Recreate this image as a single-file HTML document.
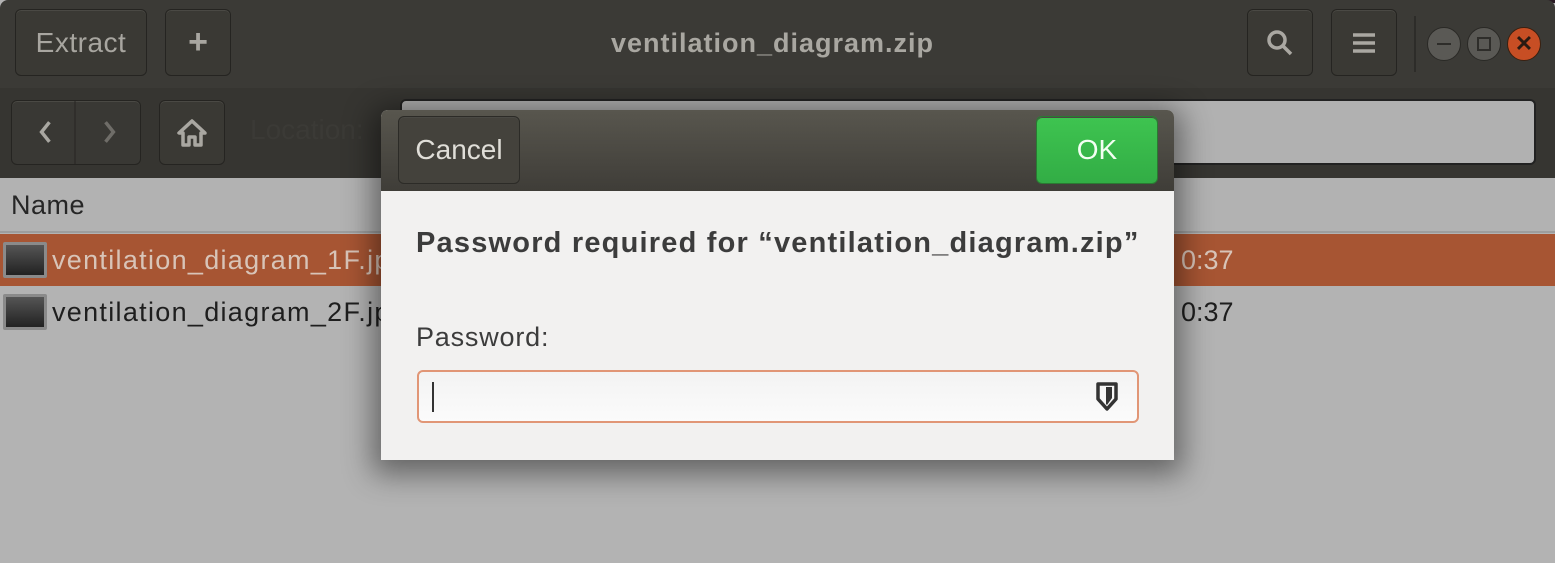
<!DOCTYPE html>
<html><head><meta charset="utf-8"><style>
*{box-sizing:border-box;margin:0;padding:0}
body{width:1555px;height:563px;overflow:hidden;background:#b3b3b3;font-family:"Liberation Sans",sans-serif;position:relative}
.abs{position:absolute}
.hb{left:0;top:0;width:1555px;height:88px;background:#3b3a36;border-radius:8px 8px 0 0}
.tb{left:0;top:88px;width:1555px;height:90px;background:#363531}
.btn{position:absolute;border:1px solid #252421;border-radius:6px;background:#3a3934;box-shadow:inset 0 1px 0 #4a4944;color:#a8a6a0;display:flex;align-items:center;justify-content:center}
.row{left:0;width:1555px;height:52px;font-size:27px;line-height:52px}
.ico{position:absolute;left:3px;top:8px;width:44px;height:36px;background:linear-gradient(#555,#222);border:3px solid #8a8a8a;border-radius:2px}
</style></head><body>
<div class="abs" style="left:1150px;top:0;width:405px;height:3px;background:#2a1a24"></div>
<div class="abs hb"></div>
<div class="btn" style="left:15px;top:9px;width:132px;height:67px;font-size:28px;letter-spacing:0.5px">Extract</div>
<div class="btn" style="left:165px;top:9px;width:66px;height:67px;font-size:34px;font-weight:bold">+</div>
<div class="abs" style="left:0;top:28px;width:1545px;text-align:center;font-size:27px;letter-spacing:1px;font-weight:bold;color:#a9a7a1">ventilation_diagram.zip</div>
<div class="btn" style="left:1247px;top:9px;width:66px;height:67px">
<svg width="30" height="30" viewBox="0 0 30 30"><circle cx="12" cy="12" r="8" fill="none" stroke="#aaa8a2" stroke-width="3.5"/><path d="M18 18 L26 26" stroke="#aaa8a2" stroke-width="3.5"/></svg></div>
<div class="btn" style="left:1331px;top:9px;width:66px;height:67px">
<svg width="22" height="22" viewBox="0 0 22 22"><path d="M0 3H22M0 11H22M0 19H22" stroke="#aaa8a2" stroke-width="3.5"/></svg></div>
<div class="abs" style="left:1414px;top:16px;width:2px;height:56px;background:#2d2c29"></div>
<div class="abs" style="left:1427px;top:27px;width:34px;height:34px;border-radius:50%;background:#5a5955;border:1px solid #2a2926"><div class="abs" style="left:9px;top:15px;width:14px;height:2px;background:#2e2d2a"></div></div>
<div class="abs" style="left:1467px;top:27px;width:34px;height:34px;border-radius:50%;background:#5a5955;border:1px solid #2a2926"><div class="abs" style="left:9px;top:9px;width:14px;height:14px;border:2px solid #2e2d2a"></div></div>
<div class="abs" style="left:1507px;top:27px;width:34px;height:34px;border-radius:50%;background:#c74e24;border:1px solid #3a2010;color:#2a1a12;font-size:22px;text-align:center;line-height:32px;font-weight:bold">✕</div>
<div class="abs tb"></div>
<div class="btn" style="left:11px;top:100px;width:130px;height:65px;background:#393834">
<svg width="130" height="65" viewBox="0 0 130 65"><path d="M38 22 L30 32 L38 42" fill="none" stroke="#a9a7a1" stroke-width="3.5"/><path d="M95 22 L103 32 L95 42" fill="none" stroke="#6f6d68" stroke-width="3.5"/><path d="M64 0V65" stroke="#262522" stroke-width="1"/></svg></div>
<div class="btn" style="left:159px;top:100px;width:66px;height:65px">
<svg width="32" height="30" viewBox="0 0 32 30"><path d="M16 3 L3 15 H7 V27 H13 V19 H19 V27 H25 V15 H29 Z" fill="none" stroke="#a9a7a1" stroke-width="3.5" stroke-linejoin="round"/></svg></div>
<div class="abs" style="left:250px;top:114px;font-size:28px;color:#3b3a36">Location:</div>
<div class="abs" style="left:400px;top:99px;width:1136px;height:66px;background:#b1b1b1;border:2px solid #222;border-radius:6px"></div>
<div class="abs" style="left:0;top:178px;width:1555px;height:55px;background:#b2b2b2;border-bottom:2px solid #9d9d9d;font-size:27px;letter-spacing:0.5px;line-height:55px;padding-left:11px;color:#262626">Name</div>
<div class="abs row" style="top:234px;background:#a75533;color:#d8c4b8"><div class="ico"></div><span style="position:absolute;left:52px;letter-spacing:1.3px">ventilation_diagram_1F.jpg</span><span style="position:absolute;left:1181px">0:37</span></div>
<div class="abs row" style="top:286px;color:#1e1e1e"><div class="ico"></div><span style="position:absolute;left:52px;letter-spacing:1.3px">ventilation_diagram_2F.jpg</span><span style="position:absolute;left:1181px">0:37</span></div>
<!-- dialog -->
<div class="abs" style="left:381px;top:110px;width:793px;height:350px;background:#f2f1f0;border-radius:7px 7px 0 0;box-shadow:0 6px 30px 8px rgba(0,0,0,0.45);overflow:hidden">
<div class="abs" style="left:0;top:0;width:793px;height:81px;background:linear-gradient(#58564e,#3f3d38)"></div>
<div class="btn" style="left:17px;top:6px;width:122px;height:68px;background:#44423c;border-color:#2c2b27;color:#e0ded8;font-size:28px">Cancel</div>
<div class="btn" style="left:655px;top:6px;width:122px;height:68px;background:linear-gradient(#3ec450,#32ad45);border-color:#2a7a32;color:#f2fff2;font-size:28px">OK</div>
<div class="abs" style="left:35px;top:117px;font-size:29px;letter-spacing:1.2px;font-weight:bold;color:#3c3c3c;white-space:nowrap">Password required for “ventilation_diagram.zip”</div>
<div class="abs" style="left:35px;top:212px;font-size:27px;letter-spacing:0.8px;color:#3c3c3c">Password:</div>
<div class="abs" style="left:36px;top:260px;width:722px;height:53px;border:2px solid #e19676;border-radius:6px;background:linear-gradient(#f3f3f3,#fbfbfb)">
<div class="abs" style="left:13px;top:10px;width:2px;height:30px;background:#333"></div>
<svg class="abs" style="left:677px;top:10px" width="22" height="30" viewBox="0 0 22 30"><path d="M2 2 H20 V17 L11 27 L2 17 Z" fill="none" stroke="#333" stroke-width="3.5" stroke-linejoin="round"/><path d="M10 5 H16 V16 L11 23 L10 22 Z" fill="#333"/></svg>
</div>
</div>
</body></html>
